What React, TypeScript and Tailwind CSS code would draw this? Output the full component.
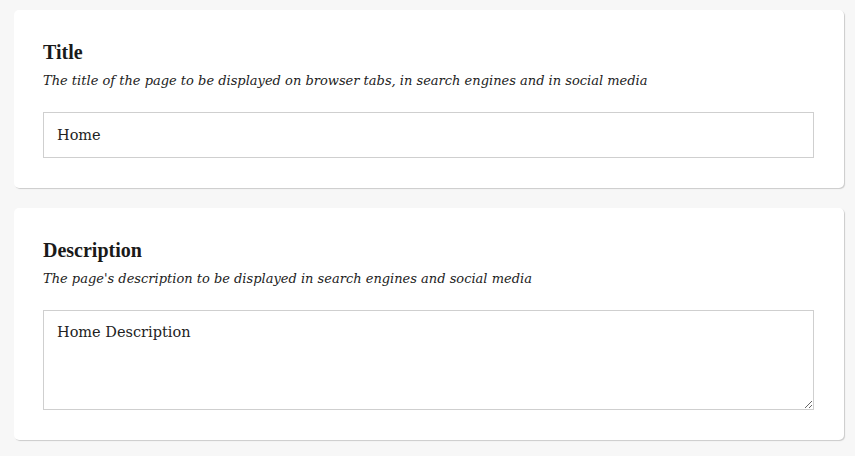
export default function App() {
  return (
    <div className="min-h-screen bg-[#f7f7f7] pt-[10px] pl-[14px]">
      <div className="flex w-[830px] flex-col gap-[20px]">
        <div className="rounded-[5px] bg-white px-[29px] pt-[29px] pb-[30px] shadow-[1px_1px_1px_rgba(0,0,0,0.18)]">
          <h2 className="font-['Liberation_Serif',serif] text-[20px] font-bold leading-[26px] text-[#1a1a1a]">Title</h2>
          <p className="mt-[6px] font-['DejaVu_Serif',serif] text-[13px] italic leading-[20px] text-[#222]">
            The title of the page to be displayed on browser tabs, in search engines and in social media
          </p>
          <input
            defaultValue="Home"
            className="mt-[21px] block h-[46px] w-[771px] border border-[#cfcfcf] px-[13px] font-['DejaVu_Serif',serif] text-[14.5px] text-[#222] outline-none"
          />
        </div>
        <div className="rounded-[5px] bg-white px-[29px] pt-[29px] pb-[30px] shadow-[1px_1px_1px_rgba(0,0,0,0.18)]">
          <h2 className="font-['Liberation_Serif',serif] text-[20px] font-bold leading-[26px] text-[#1a1a1a]">Description</h2>
          <p className="mt-[6px] font-['DejaVu_Serif',serif] text-[13px] italic leading-[20px] text-[#222]">
            The page's description to be displayed in search engines and social media
          </p>
          <textarea
            defaultValue="Home Description"
            className="mt-[21px] block h-[100px] w-[771px] border border-[#cfcfcf] px-[13px] py-[11px] font-['DejaVu_Serif',serif] text-[14.5px] leading-[20px] text-[#222] outline-none"
          />
        </div>
      </div>
    </div>
  );
}
